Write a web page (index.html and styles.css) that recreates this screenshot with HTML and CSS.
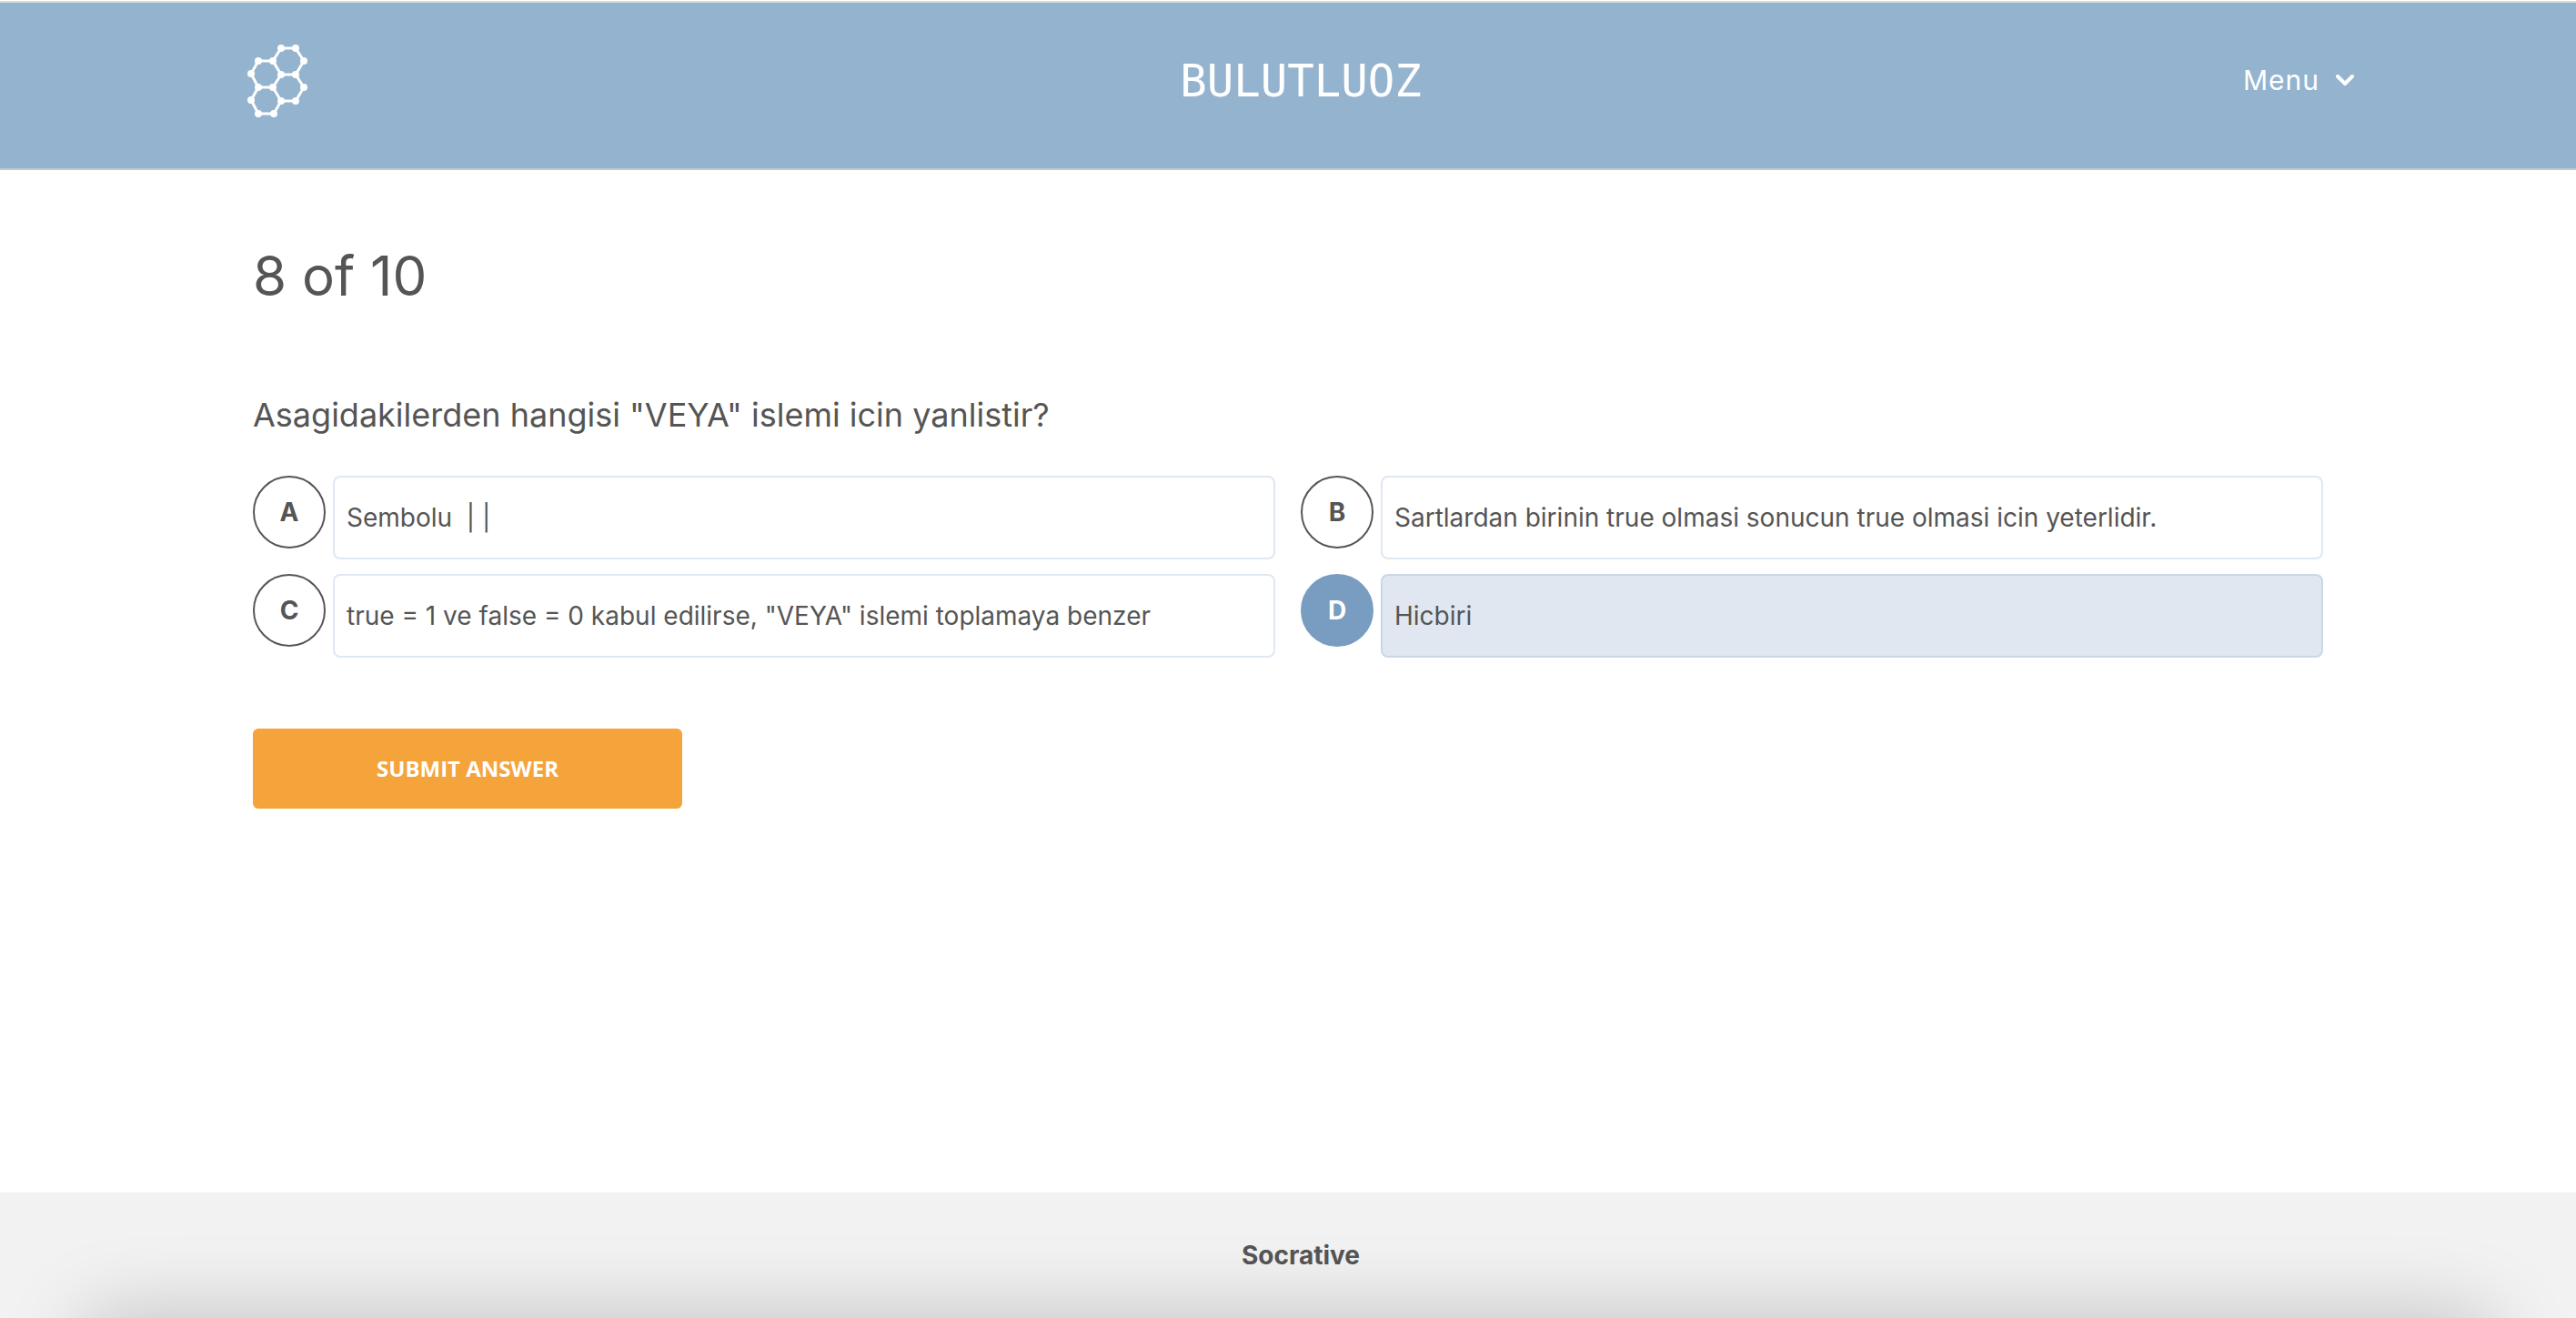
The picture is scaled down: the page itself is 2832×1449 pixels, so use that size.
FILE: index.html
```html
<!DOCTYPE html>
<html lang="tr">
<head>
<meta charset="utf-8">
<meta name="viewport" content="width=device-width, initial-scale=1">
<title>Socrative</title>
<link rel="stylesheet" href="styles.css">
</head>
<body>
<header class="header">
  <a class="logo" href="#" aria-label="Socrative">
    <svg width="66" height="82" viewBox="0 0 66 82" fill="none" stroke="#fff" stroke-width="3">
      <path d="M12 19H28L37 34L28 48H12L4 33Z"/>
      <path d="M28 19L37 5H53L62 19L53 34H37"/>
      <path d="M53 34L62 48L53 63H37L28 48"/>
      <path d="M12 48L4 62L12 77H29L37 63"/>
      <g fill="#fff" stroke="none">
        <circle cx="37" cy="5" r="4"/><circle cx="53" cy="5" r="4"/>
        <circle cx="12" cy="19" r="4"/><circle cx="28" cy="19" r="4"/><circle cx="62" cy="19" r="4"/>
        <circle cx="4" cy="33" r="4"/><circle cx="37" cy="34" r="4"/><circle cx="53" cy="34" r="4"/>
        <circle cx="12" cy="48" r="4"/><circle cx="28" cy="48" r="4"/><circle cx="62" cy="48" r="4"/>
        <circle cx="4" cy="62" r="4"/><circle cx="37" cy="63" r="4"/><circle cx="53" cy="63" r="4"/>
        <circle cx="12" cy="77" r="4"/><circle cx="29" cy="77" r="4"/>
      </g>
    </svg>
  </a>
  <h1 class="room">BULUTLUOZ</h1>
  <button class="menu" type="button">
    Menu
    <svg width="20" height="12" viewBox="0 0 20 12" fill="none" stroke="#fff" stroke-width="4" stroke-linecap="round" stroke-linejoin="round"><path d="M2 2L10 10L18 2"/></svg>
  </button>
</header>
<main class="main">
  <h2 class="progress">8 of 10</h2>
  <form class="quiz">
    <fieldset class="question">
      <legend class="prompt">Asagidakilerden hangisi "VEYA" islemi icin yanlistir?</legend>
      <div class="options">
        <label class="option"><input class="choice" type="radio" name="answer" value="A"><span class="letter">A</span><span class="answer">Sembolu&nbsp; | |</span></label>
        <label class="option"><input class="choice" type="radio" name="answer" value="B"><span class="letter">B</span><span class="answer">Sartlardan birinin true olmasi sonucun true olmasi icin yeterlidir.</span></label>
        <label class="option"><input class="choice" type="radio" name="answer" value="C"><span class="letter">C</span><span class="answer">true = 1 ve false = 0 kabul edilirse, "VEYA" islemi toplamaya benzer</span></label>
        <label class="option"><input class="choice" type="radio" name="answer" value="D" checked><span class="letter">D</span><span class="answer">Hicbiri</span></label>
      </div>
    </fieldset>
    <button class="submit" type="submit">SUBMIT ANSWER</button>
  </form>
</main>
<footer class="footer">Socrative</footer>
</body>
</html>
```
FILE: styles.css
```css
* { box-sizing: border-box; }

body {
  margin: 0;
  min-height: 100vh;
  display: flex;
  flex-direction: column;
  background: #fff;
  color: #555;
  font-family: Inter, "Liberation Sans", sans-serif;
  font-size: 28px;
}

.header {
  display: grid;
  grid-template-columns: 1fr auto 1fr;
  align-items: start;
  margin-top: 1px;
  padding: 45px 244px 53px 272px;
  background: #93b3cf;
  border-top: 2px solid #dcdcdc;
  border-bottom: 2px solid #c8c8c8;
}

.logo, .logo svg { display: block; }
.logo { width: 66px; height: 84px; }

.room {
  margin: 14px 0 0;
  color: #fff;
  font-family: "DejaVu Sans Mono", monospace;
  font-size: 49px;
  font-weight: 400;
  line-height: 56px;
}

.menu {
  display: flex;
  align-items: center;
  justify-self: end;
  gap: 18px;
  margin-top: 20px;
  padding: 0;
  border: 0;
  background: none;
  color: #fff;
  font-family: inherit;
  font-size: 30px;
  line-height: 40px;
  letter-spacing: 1px;
}

.main {
  flex: 1;
  padding: 80px 278px;
}

.progress {
  margin: 0 0 88px;
  font-size: 60px;
  font-weight: 400;
  line-height: 72px;
}

.question {
  margin: 0;
  padding: 0;
  border: 0;
  min-width: 0;
}

.prompt {
  padding: 2px 0 40px;
  font-size: 36px;
  line-height: 54px;
}

.options {
  display: grid;
  grid-template-columns: 1fr 1fr;
  gap: 16px 28px;
}

.option {
  display: flex;
  align-items: flex-start;
  gap: 8px;
  cursor: pointer;
}

.choice {
  position: absolute;
  opacity: 0;
}

.letter {
  display: flex;
  align-items: center;
  justify-content: center;
  flex: none;
  width: 80px;
  height: 80px;
  border: 2px solid #555;
  border-radius: 50%;
  font-weight: 700;
}

.answer {
  flex: 1;
  padding: 25px 13px;
  border: 2px solid #dfe8f2;
  border-radius: 8px;
  line-height: 38px;
}

.choice:checked ~ .letter {
  border-color: #789dc1;
  background: #789dc1;
  color: #fff;
}

.choice:checked ~ .answer {
  border-color: #c8d8e7;
  background: #e0e7f1;
}

.submit {
  display: block;
  width: 472px;
  margin-top: 78px;
  padding: 26px 0;
  border: 0;
  border-radius: 6px;
  background: #f5a33b;
  color: #fff;
  font-family: "Open Sans", sans-serif;
  font-size: 24px;
  font-weight: 700;
  line-height: 36px;
}

.footer {
  position: relative;
  overflow: hidden;
  padding: 50px 244px 50px 272px;
  background: #f2f2f2;
  font-weight: 700;
  line-height: 38px;
  text-align: center;
}

/* Soft shadow rising from the bottom edge of the page */
.footer::after {
  content: "";
  position: absolute;
  top: 100%;
  left: 96px;
  right: 96px;
  height: 200px;
  box-shadow: 0 0 90px rgba(0, 0, 0, 0.22);
}
```
